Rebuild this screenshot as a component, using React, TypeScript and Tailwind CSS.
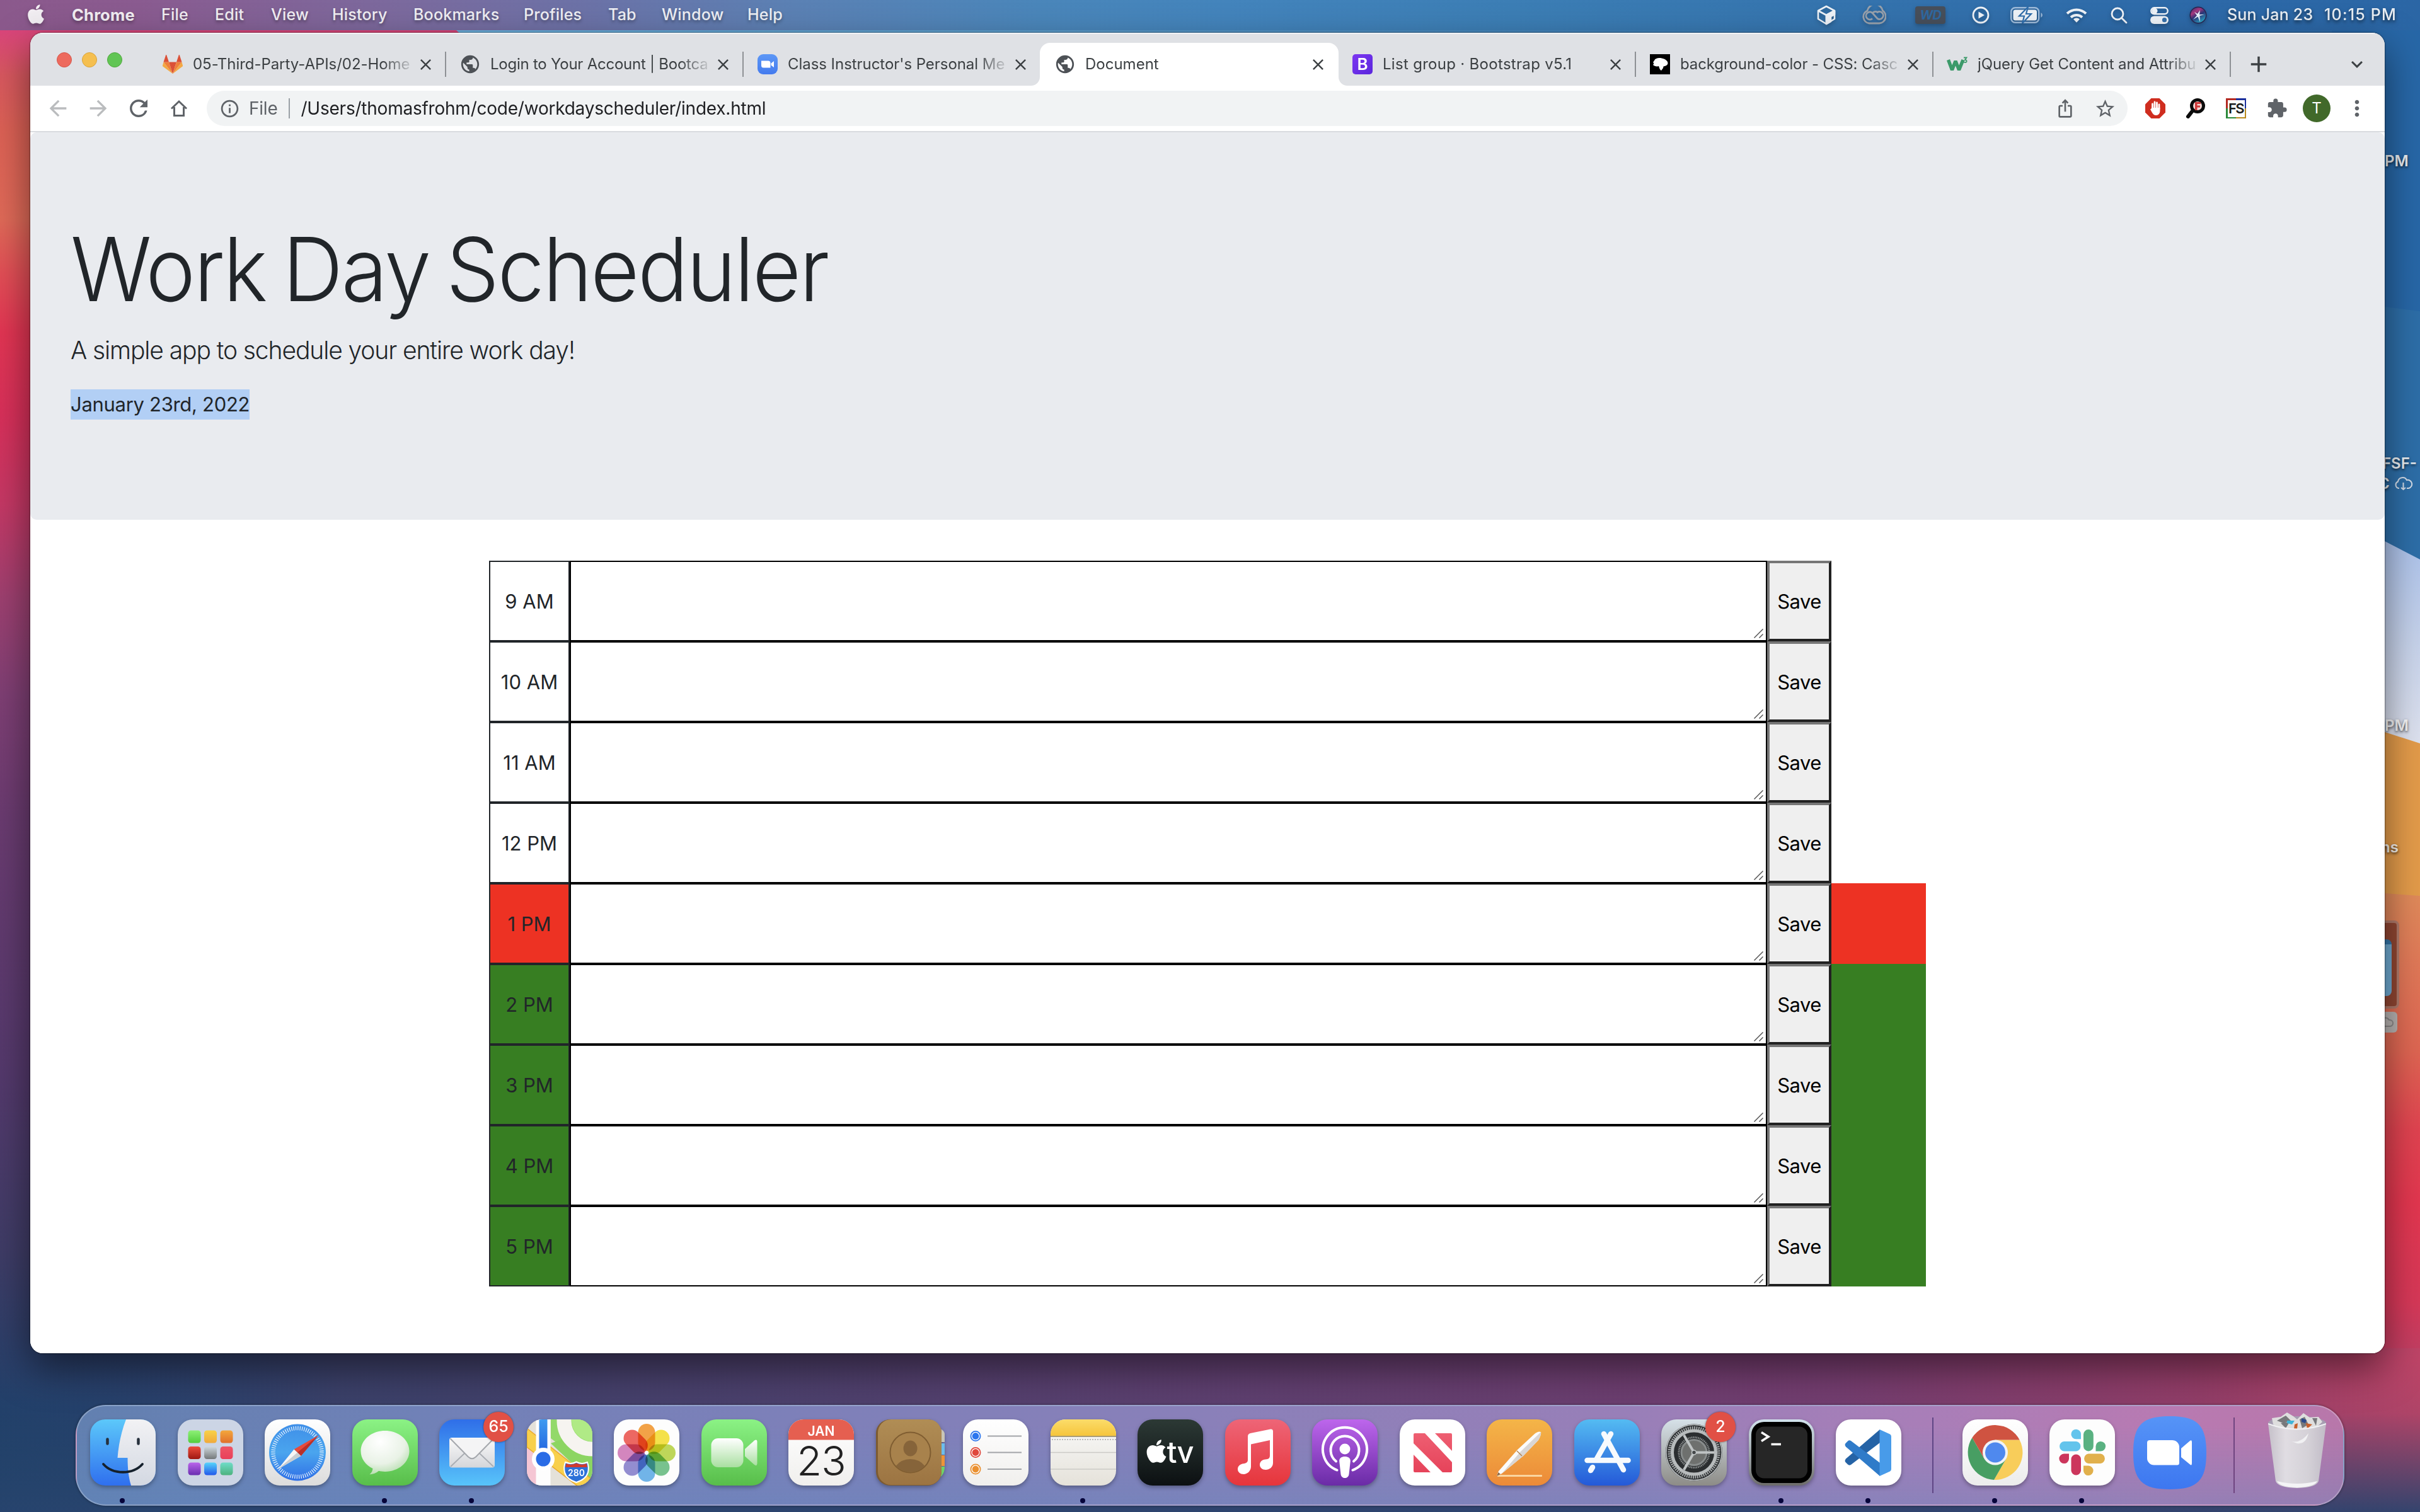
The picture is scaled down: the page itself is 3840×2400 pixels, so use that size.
import React from "react";
import { FaApple } from "react-icons/fa";
import {
  MdAdd,
  MdArrowBack,
  MdArrowForward,
  MdClose,
  MdExpandMore,
  MdExtension,
  MdInfoOutline,
  MdIosShare,
  MdMoreVert,
  MdPublic,
  MdRefresh,
  MdStarBorder,
} from "react-icons/md";

/* ---------- Wallpaper ---------- */

function Wallpaper() {
  return (
    <svg className="absolute inset-0 h-full w-full" viewBox="0 0 3840 2400" preserveAspectRatio="none">
      <defs>
        <linearGradient id="wl" x1="0" y1="0" x2="0" y2="2400" gradientUnits="userSpaceOnUse">
          <stop offset="0.02" stopColor="#d9457a" />
          <stop offset="0.05" stopColor="#d8585f" />
          <stop offset="0.085" stopColor="#dc6155" />
          <stop offset="0.145" stopColor="#e06a58" />
          <stop offset="0.18" stopColor="#e24f56" />
          <stop offset="0.22" stopColor="#e23553" />
          <stop offset="0.275" stopColor="#d8305a" />
          <stop offset="0.333" stopColor="#c53865" />
          <stop offset="0.396" stopColor="#9d4070" />
          <stop offset="0.458" stopColor="#7f3f74" />
          <stop offset="0.54" stopColor="#6a3b70" />
          <stop offset="0.71" stopColor="#54396c" />
          <stop offset="0.83" stopColor="#3e3c66" />
          <stop offset="0.93" stopColor="#22406a" />
          <stop offset="1" stopColor="#1b4066" />
        </linearGradient>
        <linearGradient id="wb" x1="0" y1="0" x2="3840" y2="0" gradientUnits="userSpaceOnUse">
          <stop offset="0" stopColor="#274170" stopOpacity="0" />
          <stop offset="0.14" stopColor="#3c4069" />
          <stop offset="0.28" stopColor="#4a406c" />
          <stop offset="0.52" stopColor="#633f70" />
          <stop offset="0.76" stopColor="#793d70" />
          <stop offset="0.91" stopColor="#9a3d68" />
          <stop offset="1" stopColor="#be4467" />
        </linearGradient>
        <linearGradient id="wbb" x1="0" y1="2160" x2="0" y2="2400" gradientUnits="userSpaceOnUse">
          <stop offset="0" stopColor="#24446b" stopOpacity="0" />
          <stop offset="0.35" stopColor="#28446b" stopOpacity="0.1" />
          <stop offset="1" stopColor="#28446e" stopOpacity="0.92" />
        </linearGradient>
        <linearGradient id="wr" x1="0" y1="1420" x2="0" y2="2400" gradientUnits="userSpaceOnUse">
          <stop offset="0" stopColor="#e08a5a" />
          <stop offset="0.1" stopColor="#e07a58" />
          <stop offset="0.25" stopColor="#de6652" />
          <stop offset="0.38" stopColor="#e04350" />
          <stop offset="0.5" stopColor="#e2364f" />
          <stop offset="0.66" stopColor="#d63858" />
          <stop offset="0.8" stopColor="#b2426a" />
          <stop offset="1" stopColor="#8a4474" />
        </linearGradient>
        <linearGradient id="wt" x1="720" y1="0" x2="3840" y2="0" gradientUnits="userSpaceOnUse">
          <stop offset="0" stopColor="#6cb0de" />
          <stop offset="0.3" stopColor="#5c9dcc" />
          <stop offset="0.6" stopColor="#3f80b8" />
          <stop offset="1" stopColor="#2a68a8" />
        </linearGradient>
        <linearGradient id="wi" x1="0" y1="860" x2="0" y2="1180" gradientUnits="userSpaceOnUse">
          <stop offset="0" stopColor="#acc2ea" />
          <stop offset="0.5" stopColor="#c6d2ea" />
          <stop offset="1" stopColor="#dee2ef" />
        </linearGradient>
      </defs>
      <rect width="3840" height="2400" fill="url(#wl)" />
      <path d="M715 40H3840V80H760Z" fill="url(#wt)" />
      <rect x="3700" y="40" width="140" height="900" fill="#2767a7" />
      <path d="M3700 476L3840 494V900H3700Z" fill="#2d6ea8" />
      <path d="M3700 840L3784 859L3840 888V1220H3700Z" fill="url(#wi)" />
      <path d="M3700 1150L3784 1162L3840 1180V1430H3700Z" fill="#e39b4a" />
      <path d="M3760 1416L3840 1422V2180H3760Z" fill="url(#wr)" />
      <rect y="2140" width="3840" height="260" fill="url(#wb)" />
      <rect y="2140" width="3840" height="260" fill="url(#wbb)" />
    </svg>
  );
}

function DesktopItems() {
  return (
    <div className="absolute inset-0 text-[24px] font-semibold leading-none text-white/90 [text-shadow:0_2px_4px_rgba(0,0,0,0.7)]">
      <span className="absolute left-[3784px] top-[244px]">PM</span>
      <span className="absolute left-[3780px] top-[724px]">FSF-</span>
      <span className="absolute left-[3774px] top-[756px]">C</span>
      <svg className="absolute left-[3799px] top-[755px] h-[24px] w-[30px]" viewBox="0 0 30 24" fill="none" stroke="#d5dde8" strokeWidth="2">
        <path d="M8 20H7A5.5 5.5 0 0 1 6 9.500A7.500 7.500 0 0 1 20 7A6.500 6.500 0 0 1 23 20H20M14.500 11V22M11 19L14.500 22L18 19" />
      </svg>
      <span className="absolute left-[3784px] top-[1140px]">PM</span>
      <span className="absolute left-[3778px] top-[1333px]">ns</span>
      <div className="absolute left-[3740px] top-[1461px] h-[140px] w-[67px] rounded-[8px] border-4 border-[#b07a6a] bg-[#914632]" />
      <div className="absolute left-[3740px] top-[1491px] h-[90px] w-[55px] rounded-[8px] border-t-8 border-[#3477ab] bg-[#6fabd3]" />
      <div className="absolute left-[3740px] top-[1606px] h-[33px] w-[64px] rounded-[6px] bg-[#b9b4b2]" />
      <svg className="absolute left-[3774px] top-[1612px] h-[22px] w-[24px]" viewBox="0 0 24 22" fill="none" stroke="#8d8a8a" strokeWidth="2">
        <path d="M4 17A5 5 0 0 1 5 7A7 7 0 0 1 17 7A5 5 0 0 1 19 17Z" />
      </svg>
    </div>
  );
}

/* ---------- Menu bar ---------- */

const MENU: [string, string][] = [
  ["File", "w-[85px]"],
  ["Edit", "w-[89px]"],
  ["View", "w-[97px]"],
  ["History", "w-[129px]"],
  ["Bookmarks", "w-[175px]"],
  ["Profiles", "w-[134px]"],
  ["Tab", "w-[85px]"],
  ["Window", "w-[136px]"],
  ["Help", "w-[60px]"],
];

function MenuBar() {
  return (
    <div className="relative flex h-[48px] w-full shrink-0 items-center bg-[linear-gradient(90deg,#8b598c_0px,#8a5b90_220px,#7b6a9e_640px,#6a73a8_960px,#5b81b4_1260px,#4a86ba_1650px,#4384bc_1950px,#3c7eb5_2400px,#3574ae_2900px,#2d69a8_3500px,#2b66a5_3840px)] text-[25px] font-medium tracking-[0.2px] text-white/90 [text-shadow:0_3px_5px_rgba(0,0,0,0.35)]">
      <FaApple className="ml-[39px] h-[35px] w-[36px] -translate-y-[2px] drop-shadow-[0_3px_3px_rgba(0,0,0,0.3)]" />
      <span className="ml-[39px] w-[142px] text-[25.5px] font-bold">Chrome</span>
      {MENU.map(([t, w]) => (
        <span key={t} className={w}>
          {t}
        </span>
      ))}
      <div className="ml-auto mr-[36px] flex h-full items-center drop-shadow-[0_3px_3px_rgba(0,0,0,0.25)]">
        <svg className="h-[32px] w-[30px]" viewBox="0 0 30 32" fill="none" stroke="#eef2f7" strokeWidth="2.6" strokeLinejoin="round">
          <path d="M15 2L28 9V22L15 30L2 22V9Z" />
          <path d="M2 9L15 16L28 9M15 16V30" />
          <path d="M15 16L28 9V15L22 18V26L15 30Z" fill="#eef2f7" />
        </svg>
        <svg className="ml-[41px] h-[30px] w-[39px]" viewBox="0 0 39 30" fill="none" stroke="#98a1ac" strokeWidth="2.800">
          <path d="M12 28A10.500 10.500 0 0 1 9 8A12.500 12.500 0 0 1 33.500 8A11 11 0 0 1 28 28Z" />
          <path d="M17 20.500A6 6 0 1 1 17 11.500L25 20.500A6 6 0 1 0 25 10.500Q22 8 17 11.500" />
        </svg>
        <div className="ml-[46px] flex h-[28px] w-[48px] items-center justify-center rounded-[4px] bg-[#474f5b] text-[20px] font-bold italic tracking-[-1px] text-[#2f68a0] [text-shadow:none]">
          WD
        </div>
        <svg className="ml-[42px] h-[28px] w-[28px]" viewBox="0 0 28 28" fill="none" stroke="#eef2f7" strokeWidth="2.8">
          <circle cx="14" cy="14" r="12" />
          <path d="M10.500 8.500L20 14L10.500 19.500Z" fill="#eef2f7" stroke="none" />
        </svg>
        <svg className="ml-[33px] h-[26px] w-[52px]" viewBox="0 0 52 26" fill="none">
          <rect x="1.200" y="1.200" width="44" height="23.600" rx="6.500" stroke="#9dbad9" strokeWidth="2.400" />
          <path d="M48.500 9A4.500 4.500 0 0 1 48.500 17Z" fill="#9dbad9" />
          <rect x="4.500" y="4.500" width="37.500" height="17" rx="3.500" fill="#eef2f7" />
          <path d="M28 0L14 14.500H22L19 26L33 11H25Z" fill="#eef2f7" stroke="#2f6dab" strokeWidth="2.200" />
        </svg>
        <svg className="ml-[36px] h-[24px] w-[34px]" viewBox="0 0 34 24" fill="none" stroke="#eef2f7" strokeWidth="4">
          <path d="M2 9.500A21.500 21.500 0 0 1 32 9.500M8 15.500A13 13 0 0 1 26 15.500" />
          <path d="M12 18.500A7.500 7.500 0 0 1 22 18.500L17 23.800Z" fill="#eef2f7" stroke="none" />
        </svg>
        <svg className="ml-[37px] h-[27px] w-[27px]" viewBox="0 0 27 27" fill="none" stroke="#eef2f7" strokeWidth="2.800" strokeLinecap="round">
          <circle cx="11" cy="11" r="9" />
          <path d="M17.500 17.500L25 25" />
        </svg>
        <svg className="ml-[36px] h-[27px] w-[29px]" viewBox="0 0 29 27" fill="none">
          <rect x="1.300" y="1.300" width="26.400" height="10" rx="5" stroke="#eef2f7" strokeWidth="2.400" />
          <circle cx="7" cy="6.300" r="4.500" fill="#eef2f7" />
          <rect y="14.500" width="29" height="12.500" rx="6.200" fill="#eef2f7" />
          <circle cx="22.500" cy="20.700" r="3.600" fill="#3570ab" />
        </svg>
        <svg className="ml-[33px] h-[28px] w-[28px]" viewBox="0 0 28 28">
          <defs>
            <linearGradient id="siri" x1="0" y1="0" x2="0.6" y2="1">
              <stop offset="0" stopColor="#3a2f6e" />
              <stop offset="0.35" stopColor="#a8397f" />
              <stop offset="0.6" stopColor="#2b3678" />
              <stop offset="1" stopColor="#2a9cc0" />
            </linearGradient>
          </defs>
          <circle cx="14" cy="14" r="13.500" fill="#2a2350" />
          <circle cx="14" cy="14" r="12" fill="url(#siri)" />
          <path d="M13 12L8 9L12 14.500L6 21L13.500 16.500L17 25L16.500 15L24 13L16 13L17 6Z" fill="#e6f2fb" />
        </svg>
        <span className="ml-[32px] w-[154px] whitespace-nowrap">Sun Jan 23</span>
        <span className="w-[116px] whitespace-nowrap tracking-[1.2px]">10:15 PM</span>
      </div>
    </div>
  );
}

/* ---------- Favicons ---------- */

function GitlabIcon() {
  return (
    <svg className="h-[30px] w-[32px]" viewBox="0 0 32 30">
      <path d="M16 30L22 11.500H10Z" fill="#db5037" />
      <path d="M16 30L10 11.500H1.500Z" fill="#ef7f3a" />
      <path d="M1.500 11.500L0 17A1.500 1.500 0 0 0 .5 18.500L16 30Z" fill="#f3a844" />
      <path d="M1.500 11.500H10L6.300 .5Q5.700 -.5 5.100 .5Z" fill="#db5037" />
      <path d="M16 30L22 11.500H30.500Z" fill="#ef7f3a" />
      <path d="M30.500 11.500L32 17A1.500 1.500 0 0 1 31.500 18.500L16 30Z" fill="#f3a844" />
      <path d="M30.500 11.500H22L25.700 .5Q26.300 -.5 26.900 .5Z" fill="#db5037" />
    </svg>
  );
}

function GlobeIcon() {
  return <MdPublic className="h-[34px] w-[34px] shrink-0 text-[#4d5156]" />;
}

function ZoomFavicon() {
  return (
    <svg className="h-[32px] w-[32px]" viewBox="0 0 32 32">
      <defs>
        <linearGradient id="zf" x1="0" y1="0" x2="0" y2="1">
          <stop offset="0" stopColor="#5c97f6" />
          <stop offset="1" stopColor="#447bee" />
        </linearGradient>
      </defs>
      <rect width="32" height="32" rx="9" fill="url(#zf)" />
      <path d="M6 10.500H17A3.500 3.500 0 0 1 20.500 14V21.500H9.500A3.500 3.500 0 0 1 6 18ZM21.500 14.500L26 11V21L21.500 17.500Z" fill="#fff" />
    </svg>
  );
}

function BootstrapIcon() {
  return (
    <div className="flex h-[32px] w-[32px] items-center justify-center rounded-[5px] bg-linear-to-br from-[#7d36f2] to-[#5a26dc] text-[26px] font-semibold leading-none text-white">
      B
    </div>
  );
}

function MdnIcon() {
  return (
    <svg className="h-[32px] w-[32px]" viewBox="0 0 32 32">
      <rect width="32" height="32" fill="#000" />
      <path d="M7 10C9 6 14 5.500 19 6.500C24 7.500 28 10 28.500 14C28.500 16 27 18 25 18.500L21.500 19.500L21 22L18 26C15 24 15 21 14 19C11 20 7 19 5 17L6.500 14.500L5 13Z" fill="#fff" />
    </svg>
  );
}

function W3Icon() {
  return (
    <svg className="h-[32px] w-[34px]" viewBox="0 0 34 32" fill="none" stroke="#3c9a6a">
      <path d="M2.500 9L8.500 25L14 11L19.500 25L26 9" strokeWidth="5.400" strokeLinejoin="bevel" />
      <path d="M27 5.500H31.500L29 9Q32.500 9.500 31.500 12Q30 14 27 12.500" strokeWidth="1.800" />
    </svg>
  );
}

/* ---------- Browser chrome ---------- */

type TabInfo = { title: string; icon: React.ReactNode; active?: boolean; sep?: boolean; fade?: boolean; tracking?: string };

const TABS: TabInfo[] = [
  { title: "05-Third-Party-APIs/02-Home", icon: <GitlabIcon />, sep: true, fade: true, tracking: "tracking-[-0.05px]" },
  { title: "Login to Your Account | Bootca", icon: <GlobeIcon />, sep: true, fade: true, tracking: "tracking-[-0.24px]" },
  { title: "Class Instructor's Personal Me", icon: <ZoomFavicon />, fade: true, tracking: "tracking-[-0.05px]" },
  { title: "Document", icon: <GlobeIcon />, active: true },
  { title: "List group · Bootstrap v5.1", icon: <BootstrapIcon />, sep: true, tracking: "tracking-[0.3px]" },
  { title: "background-color - CSS: Casc", icon: <MdnIcon />, sep: true, fade: true, tracking: "tracking-[-0.1px]" },
  { title: "jQuery Get Content and Attribu", icon: <W3Icon />, sep: true, fade: true, tracking: "tracking-[-0.1px]" },
];

function Tab({ tab }: { tab: TabInfo }) {
  return (
    <div className="relative flex h-[68px] w-[472px] shrink-0 items-center">
      {tab.active && (
        <svg className="absolute -left-[16px] top-0 h-[68px] w-[504px]" viewBox="0 0 504 68">
          <path d="M0 68A14 14 0 0 0 14 54V16A16 16 0 0 1 30 0H472A16 16 0 0 1 488 16V54A14 14 0 0 0 502 68Z" fill="#fff" />
        </svg>
      )}
      <div className="relative ml-[21px] flex w-[34px] justify-center">{tab.icon}</div>
      <div
        className={`relative ml-[15px] w-[346px] whitespace-nowrap ${tab.tracking ?? ""} ${
          tab.fade ? "[mask-image:linear-gradient(90deg,#000_300px,rgba(0,0,0,0.15)_346px)]" : ""
        }`}
      >
        {tab.title}
      </div>
      <MdClose className="relative ml-[9px] h-[29px] w-[29px] text-[#3c4043]" />
      {tab.sep && <div className="ml-auto h-[40px] w-[2px] bg-[#8e9195]" />}
    </div>
  );
}

function TabStrip() {
  return (
    <div className="flex h-[84px] shrink-0 items-end bg-[#dfe1e5] text-[24px] text-[#3c4043] shadow-[inset_0_2px_0_rgba(255,255,255,0.6)]">
      <div className="flex h-[82px] w-[188px] shrink-0 items-center gap-[16px] pl-[42px]">
        <div className="h-[24px] w-[24px] rounded-full border border-[#d5564b] bg-[#ed6a5e]" />
        <div className="h-[24px] w-[24px] rounded-full border border-[#d9a43c] bg-[#f5bf4f]" />
        <div className="h-[24px] w-[24px] rounded-full border border-[#51a73f] bg-[#61c554]" />
      </div>
      {TABS.map((t) => (
        <Tab key={t.title} tab={t} />
      ))}
      <div className="flex h-[68px] flex-1 items-center justify-between pl-[23px] pr-[26px]">
        <MdAdd className="h-[42px] w-[42px]" />
        <MdExpandMore className="h-[36px] w-[36px]" />
      </div>
    </div>
  );
}

function Toolbar() {
  return (
    <div className="flex h-[74px] shrink-0 items-center border-b-2 border-[#d9dbdf] bg-white text-[#5f6368]">
      <div className="flex w-[280px] items-center pl-[24px]">
        <MdArrowBack className="h-[40px] w-[40px] text-[#babcbe]" />
        <MdArrowForward className="ml-[24px] h-[40px] w-[40px] text-[#babcbe]" />
        <MdRefresh className="ml-[23px] h-[42px] w-[42px]" />
        <svg className="ml-[29px] h-[28px] w-[28px]" viewBox="0 0 28 28" fill="none" stroke="#5f6368" strokeWidth="3">
          <path d="M2 14.500L14 3L26 14.500M6.500 12V25.500H21.500V12" />
        </svg>
      </div>
      <div className="flex h-[56px] w-[3048px] items-center rounded-full bg-[#f1f3f4] pl-[20px] pr-[18px] text-[28px] tracking-[-0.23px]">
        <MdInfoOutline className="h-[33px] w-[33px]" />
        <span className="ml-[14px]">File</span>
        <div className="ml-[17px] h-[32px] w-[2px] bg-[#9aa0a6]" />
        <span className="ml-[18px] text-[#202124]">/Users/thomasfrohm/code/workdayscheduler/index.html</span>
        <MdIosShare className="ml-auto h-[32px] w-[32px]" />
        <MdStarBorder className="ml-[30px] h-[35px] w-[35px]" />
      </div>
      <svg className="ml-[28px] h-[32px] w-[32px]" viewBox="0 0 32 32">
        <path d="M9.500 0H22.500L32 9.500V22.500L22.500 32H9.500L0 22.500V9.500Z" fill="#cf2d1f" />
        <path d="M11.500 18V9M15 16V6M18.500 16V7M22 17V10" stroke="#fff" strokeWidth="2.800" strokeLinecap="round" />
        <path d="M10.200 15H23.400V20C23.400 24 21 27 17.500 27C14 27 12 25 10.500 22L8 17.500L9.500 16.500Z" fill="#fff" />
      </svg>
      <svg className="ml-[32px] h-[32px] w-[32px]" viewBox="0 0 32 32">
        <circle cx="19" cy="12" r="9.500" fill="#f4d9d7" stroke="#0b0b0b" strokeWidth="5" />
        <path d="M11 20L4 29" stroke="#0b0b0b" strokeWidth="6" strokeLinecap="round" />
        <path d="M15 19V6H24V9H18.500V11.500H23V14.500H18.500V19Z" fill="#cf3b3b" />
      </svg>
      <div className="ml-[32px] flex h-[32px] w-[32px] items-center justify-center bg-[conic-gradient(#1c2f9c_0_25%,#b98b1f_0_50%,#2c8a3a_0_75%,#b32a22_0)]">
        <div className="flex h-[27px] w-[27px] items-center justify-center bg-white text-[22px] font-semibold tracking-[-1.5px] text-[#1c1c1c]">FS</div>
      </div>
      <MdExtension className="ml-[32px] h-[34px] w-[34px]" />
      <div className="ml-[24px] flex h-[44px] w-[44px] items-center justify-center rounded-full bg-[#41692a] text-[24px] text-white">T</div>
      <MdMoreVert className="ml-[22px] h-[40px] w-[40px]" />
    </div>
  );
}

/* ---------- Page ---------- */

const HOURS: [string, "past" | "present" | "future"][] = [
  ["9 AM", "past"],
  ["10 AM", "past"],
  ["11 AM", "past"],
  ["12 PM", "past"],
  ["1 PM", "present"],
  ["2 PM", "future"],
  ["3 PM", "future"],
  ["4 PM", "future"],
  ["5 PM", "future"],
];

const ROW_BG = { past: "bg-white", present: "bg-[#ed3223]", future: "bg-[#377e22]" };

function Scheduler() {
  return (
    <div className="ml-[728px] mt-[65px] flex w-[2280px] flex-col text-[31px]">
      {HOURS.map(([label, state]) => (
        <div key={label} className={`flex h-[128px] ${ROW_BG[state]}`}>
          <div className="flex w-[128px] items-center justify-center border-2 border-[#212529] pt-[2px] text-[#212529]">{label}</div>
          <div className="flex w-[1900px] items-end justify-end border-2 border-black bg-white pb-[3px] pr-[4px]">
            <svg className="h-[15px] w-[15px]" viewBox="0 0 15 15" fill="none" stroke="#555" strokeWidth="1.500">
              <path d="M.5 14.500L14.500 .5M8.500 14.500L14.500 8.500" />
            </svg>
          </div>
          <div className="flex w-[102px] items-center justify-center border-4 border-b-[#212121] border-l-[#767676] border-r-[#212121] border-t-[#767676] bg-[#efefef] pt-[2px] tracking-[-0.6px] text-black">
            Save
          </div>
        </div>
      ))}
    </div>
  );
}

function Page() {
  return (
    <div className="flex flex-1 flex-col bg-white text-[#212529]">
      <div className="flex h-[615px] flex-col items-start rounded-[10px] bg-[#e9ebef] pl-[64px] pt-[131px]">
        <h1 className="flex h-[172px] origin-left scale-x-95 items-center whitespace-nowrap text-[140px] font-light leading-none tracking-[-2.600px] [word-spacing:-9px]">
          Work Day Scheduler
        </h1>
        <p className="mt-[13px] flex h-[60px] items-center text-[39px] font-light tracking-[-1.1px]">
          A simple app to schedule your entire work day!
        </p>
        <p className="mt-[32px] flex h-[48px] items-center bg-[#b2cff5] pt-[1px] text-[31px] tracking-[-0.3px]">January 23rd, 2022</p>
      </div>
      <Scheduler />
    </div>
  );
}

/* ---------- Dock icons ---------- */

function Icon({ children }: { children: React.ReactNode }) {
  return (
    <svg className="h-[105px] w-[104px] overflow-visible drop-shadow-[0_3px_3px_rgba(0,0,0,0.3)]" viewBox="0 0 104 105">
      {children}
    </svg>
  );
}

function Grad({ id, from, to, mid }: { id: string; from: string; to: string; mid?: string }) {
  return (
    <linearGradient id={id} x1="0" y1="0" x2="0" y2="1">
      <stop offset="0" stopColor={from} />
      {mid && <stop offset="0.5" stopColor={mid} />}
      <stop offset="1" stopColor={to} />
    </linearGradient>
  );
}

function Base({ fill }: { fill: string }) {
  return <rect width="104" height="105" rx="24" fill={fill} />;
}

function Finder() {
  return (
    <Icon>
      <defs>
        <Grad id="f1" from="#5cc8fa" to="#2f6fee" />
        <Grad id="f2" from="#f2f2f4" to="#d3d8e2" />
        <clipPath id="rc">
          <rect width="104" height="105" rx="24" />
        </clipPath>
      </defs>
      <g clipPath="url(#rc)">
        <rect width="104" height="105" fill="url(#f1)" />
        <path d="M57 0C50 18 45 40 43.500 61H59.500C59.500 78 61 92 65 105H104V0Z" fill="url(#f2)" />
      </g>
      <path d="M27.500 31.500V38.500M76.500 31.500V38.500" stroke="#26303c" strokeWidth="4.500" strokeLinecap="round" />
      <path d="M21 71C36 88 68 88 83 71" fill="none" stroke="#15202c" strokeWidth="3.800" strokeLinecap="round" />
    </Icon>
  );
}

const PADS: [string, string][] = [
  ["#8ef077", "#52ce3c"], ["#f8d24a", "#f0a93a"], ["#f3a73c", "#e0702c"],
  ["#ee4d3c", "#9e1812"], ["#cfd9de", "#74787a"], ["#ee5566", "#e8405a"],
  ["#b964ea", "#6a2fb0"], ["#57d4fb", "#2258ea"], ["#6fdcc8", "#4db27e"],
];

function Launchpad() {
  return (
    <Icon>
      <Base fill="#ccd5e5" />
      {PADS.map(([a, b], i) => (
        <g key={i}>
          <defs>
            <Grad id={`pad${i}`} from={a} to={b} />
          </defs>
          <rect x={16.500 + (i % 3) * 25.500} y={17.500 + Math.floor(i / 3) * 25.500} width="20" height="20" rx="4.500" fill={`url(#pad${i})`} />
        </g>
      ))}
    </Icon>
  );
}

function Safari() {
  return (
    <Icon>
      <defs>
        <Grad id="s1" from="#ffffff" to="#dcdcdc" />
        <Grad id="s2" from="#3f8fe8" mid="#4aa5ee" to="#2f6fe6" />
      </defs>
      <Base fill="url(#s1)" />
      <circle cx="52" cy="52.500" r="45" fill="url(#s2)" />
      <circle cx="52" cy="52.500" r="38.500" fill="none" stroke="#e8f3fc" strokeWidth="6.500" strokeDasharray="1.200 2.160" />
      <path d="M85.700 25L46.500 47.500L57.500 58Z" fill="#e64a3c" />
      <path d="M85.700 25L52 52.500L57.500 58Z" fill="#b9302a" />
      <path d="M21 79L46.500 47.500L57.500 58Z" fill="#f6f6f6" />
      <path d="M21 79L52 52.500L57.500 58Z" fill="#c9ced2" />
    </Icon>
  );
}

function Messages() {
  return (
    <Icon>
      <defs>
        <Grad id="m1" from="#8bf285" to="#58be4a" />
        <radialGradient id="m2" cx="0.4" cy="0.25" r="0.85">
          <stop offset="0" stopColor="#fff" />
          <stop offset="0.6" stopColor="#e9f2e6" />
          <stop offset="1" stopColor="#a9d8a0" />
        </radialGradient>
      </defs>
      <Base fill="url(#m1)" />
      <path d="M52 18C73.500 18 90.500 32.500 90.500 50.300S73.500 83 52 83C48 83 45 82.500 42 81.800C38 85.500 32 87.500 27.500 87.200C31 84.500 32 81.500 32.500 78C21 72.500 13.500 62.500 13.500 50.300C13.500 32.500 30.500 18 52 18Z" fill="url(#m2)" />
    </Icon>
  );
}

function Mail() {
  return (
    <Icon>
      <defs>
        <Grad id="ma1" from="#2f6ee8" to="#58c4fa" />
        <Grad id="ma2" from="#fafafa" to="#d4d6da" />
      </defs>
      <Base fill="url(#ma1)" />
      <rect x="16" y="29" width="72" height="47.500" rx="4" fill="url(#ma2)" />
      <path d="M18 75L41 53M86 75L63 53" stroke="#a9adb3" strokeWidth="1.800" />
      <path d="M17.500 30.500L46 59.500Q52 65 58 59.500L86.500 30.500" fill="#f4f4f5" stroke="#a4a7ac" strokeWidth="2" />
    </Icon>
  );
}

function Maps() {
  return (
    <Icon>
      <defs>
        <Grad id="mp" from="#3f9af0" to="#2468e0" />
      </defs>
      <g clipPath="url(#rc)">
        <rect width="104" height="105" fill="#e4e1d9" />
        <path d="M38 0H104V80L38 30Z" fill="#93d96a" />
        <path d="M38 38L104 100V50L60 30Z" fill="#8cd562" />
        <circle cx="104" cy="2" r="45" fill="none" stroke="#f6f4f0" strokeWidth="23" />
        <circle cx="104" cy="2" r="33" fill="#b0ea86" />
        <path d="M0 44L15 58V105H0Z" fill="#f5c6d4" />
        <path d="M0 14L104 96V124L0 44Z" fill="#f8d04c" stroke="#eba92f" strokeWidth="1.500" />
        <rect x="14.500" width="23" height="105" fill="#fdfdfd" />
        <rect x="19.500" width="13" height="50" fill="url(#mp)" />
        <circle cx="26" cy="63" r="18" fill="#fff" />
        <circle cx="26" cy="63" r="11.500" fill="#2a6ce6" />
      </g>
      <path d="M61 68Q70 72 78.500 67.500Q87 72 96 68Q99 76 97 84Q94 95 78.500 100Q63 95 60 84Q58 76 61 68Z" fill="#2c71d8" stroke="#fff" strokeWidth="2" />
      <path d="M62.500 70Q70 73.500 78.500 69.500Q87 73.500 94.500 70L96 76H61Z" fill="#cf3b30" />
      <text x="78.500" y="90" fontSize="14" fontWeight="600" fill="#fff" textAnchor="middle">280</text>
    </Icon>
  );
}

const PETALS = ["#f19a37", "#f3de3c", "#b8d24b", "#6cbd84", "#65aee6", "#8a83cc", "#cf7cb8", "#ea5b55"];

function Photos() {
  return (
    <Icon>
      <Base fill="#fdfdfd" />
      <g className="isolate">
        {PETALS.map((c, i) => (
          <rect key={c} x="38.500" y="7" width="27" height="43" rx="13.500" fill={c} fillOpacity="0.92" transform={`rotate(${i * 45} 52 53)`} className="mix-blend-multiply" />
        ))}
      </g>
    </Icon>
  );
}

function FaceTime() {
  return (
    <Icon>
      <defs>
        <Grad id="ft2" from="#ffffff" to="#a9dfa0" />
      </defs>
      <Base fill="url(#m1)" />
      <rect x="15.500" y="30" width="51" height="46" rx="11" fill="url(#ft2)" />
      <path d="M69 47L84 33.500Q88 31 88.500 35V70Q88 75 84 72L69 58.500Z" fill="url(#ft2)" />
    </Icon>
  );
}

function Calendar() {
  return (
    <Icon>
      <defs>
        <Grad id="c1" from="#ffffff" to="#f0efed" />
      </defs>
      <Base fill="url(#c1)" />
      <rect width="104" height="32.500" fill="#e55f50" clipPath="url(#rc)" />
      <text x="52" y="25.500" fontSize="21" fontWeight="600" fill="#fff" textAnchor="middle">JAN</text>
      <text x="52" y="89" fontSize="65" fontWeight="300" fill="#222" textAnchor="middle" letterSpacing="-1">23</text>
    </Icon>
  );
}

function Contacts() {
  return (
    <Icon>
      <defs>
        <Grad id="co" from="#b08d55" to="#9c7442" />
      </defs>
      <path d="M92 14Q109 14 109 24V36H92Z" fill="#c9c5b6" />
      <rect x="92" y="38" width="17" height="18" fill="#6cbdec" />
      <rect x="92" y="57" width="17" height="17" fill="#ee9438" />
      <path d="M92 75H109Q109 92 92 96Z" fill="#6fd366" />
      <rect width="104" height="105" rx="22" fill="#7d5b30" />
      <rect x="3" width="101" height="104" rx="21" fill="url(#co)" />
      <circle cx="54.500" cy="52.500" r="32" fill="#a8824c" stroke="#7f5d31" strokeWidth="2" />
      <ellipse cx="54.500" cy="46" rx="11" ry="12.500" fill="#86643a" />
      <path d="M31.500 74Q40 63 54.500 63T77.500 74A32 32 0 0 1 31.500 74Z" fill="#86643a" />
    </Icon>
  );
}

function Reminders() {
  const rows: [number, string][] = [[26.500, "#2c76ee"], [52.500, "#e0483c"], [79, "#ea9030"]];
  return (
    <Icon>
      <Base fill="url(#c1)" />
      {rows.map(([y, c]) => (
        <g key={y}>
          <circle cx="20" cy={y} r="7.600" fill="#fff" stroke={c} strokeWidth="1.800" />
          <circle cx="20" cy={y} r="5.400" fill={c} />
          <rect x="39" y={y - 1} width="54" height="2" fill="#a2a4a8" />
        </g>
      ))}
    </Icon>
  );
}

function Notes() {
  return (
    <Icon>
      <defs>
        <Grad id="n1" from="#fafafa" to="#e5e2da" />
        <Grad id="n2" from="#fbdc6a" to="#f6c53c" />
      </defs>
      <Base fill="url(#n1)" />
      <g clipPath="url(#rc)">
        <rect width="104" height="26" fill="url(#n2)" />
        <rect y="26" width="104" height="2" fill="#a89c78" />
        <path d="M2 32H104" stroke="#b9b9b9" strokeWidth="2" strokeDasharray="2 2" />
        <path d="M0 52.500H104M0 79H104" stroke="#cbcac6" strokeWidth="1.500" />
      </g>
    </Icon>
  );
}

function AppleTv() {
  return (
    <Icon>
      <defs>
        <Grad id="tv" from="#2c3935" to="#0c1012" />
      </defs>
      <Base fill="url(#tv)" />
      <FaApple x="9" y="29.500" size={42} color="#fff" />
      <text x="46.500" y="69" fontSize="47" fontWeight="500" letterSpacing="-1" fill="#fff">tv</text>
    </Icon>
  );
}

function Music() {
  return (
    <Icon>
      <defs>
        <Grad id="mu" from="#ee6577" to="#e6353b" />
      </defs>
      <Base fill="url(#mu)" />
      <path d="M36 27Q36 23 40 22L72 15.500Q76 15 76 19V69C76 76 70 80 64.500 80C59 80 55 76.500 55 72C55 67 59 64 64 63.500C69 63 71 62 71 57V33L41 39.500V75C41 82 35 87 29.500 87C24 87 20 83.500 20 79C20 74 24 71 29 70.300C34 69.500 36 68 36 64Z" fill="#fff" />
    </Icon>
  );
}

function Podcasts() {
  return (
    <Icon>
      <defs>
        <Grad id="pc" from="#bd66ec" to="#6a2ba6" />
      </defs>
      <Base fill="url(#pc)" />
      <g fill="none" stroke="#fff" strokeWidth="4" strokeLinecap="round">
        <path d="M39.500 80.500A35 35 0 1 1 64.500 80.500" />
        <path d="M38 66.500A22.500 22.500 0 1 1 66 66.500" />
      </g>
      <circle cx="52" cy="47" r="8.500" fill="#fff" />
      <path d="M52 59C57 59 61 61.500 60.800 66L58.500 87C58 91 55 93 52 93S46 91 45.500 87L43.200 66C43 61.500 47 59 52 59Z" fill="#fff" />
    </Icon>
  );
}

function News() {
  return (
    <Icon>
      <defs>
        <Grad id="ne" from="#ee5f72" to="#e6435a" />
      </defs>
      <Base fill="#fff" />
      <path d="M24 22H40L83 68V82Q83 84 81 84H68L22 38V24Q22 22 24 22ZM56 22H81Q83 22 83 24V50ZM22 56L49 84H24Q22 84 22 82Z" fill="url(#ne)" />
    </Icon>
  );
}

function Pages() {
  return (
    <Icon>
      <defs>
        <Grad id="pg" from="#f4b548" to="#ec8a38" />
      </defs>
      <Base fill="url(#pg)" />
      <rect x="17" y="88" width="71" height="3" rx="1" fill="#fad5a0" />
      <path d="M86 20Q87 24 82 33L58 58L24 86L16 90L19 82L49 48L76 23Q82 18 86 20Z" fill="#fbfbfb" />
      <path d="M86 20Q87 24 82 33L58 58L24 86L53 52Z" fill="#d9d6d4" />
      <path d="M48 50L56 58" stroke="#b3824c" strokeWidth="1.500" />
      <path d="M16 90L18.500 84L22 87Z" fill="#8a6a4a" />
    </Icon>
  );
}

function AppStore() {
  return (
    <Icon>
      <defs>
        <Grad id="as" from="#54bbf2" to="#2459d8" />
      </defs>
      <Base fill="url(#as)" />
      <g stroke="#f7fafd" strokeWidth="8.500" strokeLinecap="round">
        <path d="M58 23L36 62" />
        <path d="M47 23L78 80" />
        <path d="M20.500 65H85.500" />
        <path d="M29 76L26 81" />
      </g>
    </Icon>
  );
}

function Preferences() {
  return (
    <Icon>
      <defs>
        <Grad id="pr" from="#d6e1e8" to="#8d8c87" />
      </defs>
      <Base fill="url(#pr)" />
      <circle cx="52" cy="52.500" r="45" fill="#2b2e30" />
      <circle cx="52" cy="52.500" r="44" fill="none" stroke="#b6babc" strokeWidth="1.500" />
      <circle cx="52" cy="52.500" r="39" fill="none" stroke="#a3a7a8" strokeWidth="5" strokeDasharray="1.900 1.500" />
      <circle cx="52" cy="52.500" r="34.500" fill="none" stroke="#b7bbbc" strokeWidth="5" />
      <circle cx="52" cy="52.500" r="24" fill="none" stroke="#8f9393" strokeWidth="3" strokeDasharray="1.500 1.200" />
      <circle cx="52" cy="52.500" r="20" fill="#6e706e" stroke="#888c8c" strokeWidth="3" />
      <path d="M52 52.500H84M52 52.500L36 25M52 52.500L36 80" stroke="#bfc3c4" strokeWidth="4" />
      <circle cx="52" cy="52.500" r="3.500" fill="#44484a" stroke="#c4c8c9" strokeWidth="1.500" />
    </Icon>
  );
}

function Terminal() {
  return (
    <Icon>
      <defs>
        <Grad id="te" from="#d3e4ee" to="#6d6c6a" />
      </defs>
      <Base fill="url(#te)" />
      <rect x="4" y="4" width="96" height="97" rx="20" fill="#000" />
      <rect x="11" y="11.500" width="82" height="82" rx="13" fill="#262626" />
      <path d="M20 20.500L31 27.500L20 34.500" fill="none" stroke="#fff" strokeWidth="3.500" />
      <path d="M35.500 39.500H51" stroke="#fff" strokeWidth="3.500" />
    </Icon>
  );
}

function VsCode() {
  return (
    <Icon>
      <Base fill="#fff" />
      <path d="M70 16V37L24 72Q21 73.500 19 71.500L15.500 68Q13.500 65.500 16 62.500Z" fill="#2563a6" />
      <path d="M70 90V69L24 34Q21 32.500 19 34.500L15.500 38Q13.500 40.500 16 43.500Z" fill="#2f7bc9" />
      <path d="M69.500 16L86 23.500Q88 24.500 88 27V79Q88 81.500 86 82.500L69.500 90Z" fill="#489be9" />
    </Icon>
  );
}

function Chrome() {
  return (
    <Icon>
      <defs>
        <Grad id="ch" from="#ffffff" to="#ececec" />
      </defs>
      <Base fill="url(#ch)" />
      <g transform="translate(52 52.500)">
        <path d="M0 -20H38.600A43.500 43.500 0 0 1 -2 43.400L17.300 10Z" fill="#f8cd5a" />
        <path d="M-2 43.400A43.500 43.500 0 0 1 -36.600 -23.400L-17.300 10H17.300Z" fill="#489e63" />
        <path d="M38.600 -20A43.500 43.500 0 0 0 -36.600 -23.400L-17.300 10L0 -20Z" fill="#cf5341" />
        <circle r="20" fill="#f1f3f6" />
        <circle r="16" fill="#4f89ee" />
      </g>
    </Icon>
  );
}

function Slack() {
  return (
    <Icon>
      <Base fill="#fdfdfd" />
      <path d="M50 31V24A7.800 7.800 0 1 0 42.300 31.300H50ZM23 35H42.500A7.800 7.800 0 0 1 42.500 50.500H23A7.800 7.800 0 0 1 23 35Z" fill="#63c4ec" />
      <path d="M54 24A7.900 7.900 0 0 1 69.800 24V42.500A7.900 7.900 0 0 1 54 42.500ZM73.500 50.500V42.500A7.800 7.800 0 1 1 81 50.500Z" fill="#5ab181" />
      <path d="M62 54.500H81A7.800 7.800 0 0 1 81 70H62A7.800 7.800 0 0 1 62 54.500ZM54 73.500H62A7.800 7.800 0 1 1 54 81.500Z" fill="#e1b04c" />
      <path d="M34.500 62.500A7.800 7.800 0 0 1 50 62.500V81.500A7.800 7.800 0 0 1 34.500 81.500ZM31 54.500V62.500A7.800 7.800 0 1 1 23 54.500Z" fill="#cc365c" />
    </Icon>
  );
}

function Zoom() {
  return (
    <svg className="-mx-[6px] h-[116px] w-[116px]" viewBox="0 0 116 116">
      <defs>
        <Grad id="zo" from="#5694f7" to="#3d77f0" />
      </defs>
      <path d="M58 0C102 0 116 14 116 58S102 116 58 116S0 102 0 58S14 0 58 0Z" fill="url(#zo)" />
      <path d="M26 38H62A11 11 0 0 1 73 49V74A3.500 3.500 0 0 1 69.500 77.500H33A11 11 0 0 1 22 66.500V42A4 4 0 0 1 26 38ZM76 51L90 39Q93 37 93 41V74.500Q93 79 90 76.500L76 65Z" fill="#fff" />
    </svg>
  );
}

function Trash() {
  return (
    <svg className="-my-[8px] h-[122px] w-[92px] -translate-y-[3px]" viewBox="0 0 92 122">
      <defs>
        <linearGradient id="tr" x1="0" y1="0" x2="1" y2="0">
          <stop offset="0" stopColor="#c6c4cb" />
          <stop offset="0.3" stopColor="#e3e2e5" />
          <stop offset="0.7" stopColor="#d6d5d9" />
          <stop offset="1" stopColor="#c2bfc8" />
        </linearGradient>
      </defs>
      <ellipse cx="46" cy="18" rx="46" ry="11" fill="#a69db2" />
      <path d="M6 10L20 8L30 1L40 7L46 12L56 2L66 9L80 8L86 16L74 27H18L8 20Z" fill="#dedede" />
      <path d="M14 14L28 6L36 14L24 18ZM50 12L58 8L64 20L54 26ZM70 10L78 10L76 22ZM20 18L34 16L28 26Z" fill="#77787b" />
      <path d="M30 14H42L38 20L30 18Z" fill="#3fb4d8" />
      <path d="M60 18L70 20L62 27ZM42 20L47 18L46 27H41Z" fill="#c8602c" />
      <path d="M53 10L61 13L59 18L53 16Z" fill="#2c4a8c" />
      <path d="M0 19Q46 36 92 19L80 110Q77 120 46 121Q15 120 12 110Z" fill="url(#tr)" fillOpacity="0.95" />
      <path d="M0 19Q46 36 92 19" fill="none" stroke="#f2f1f4" strokeWidth="2" />
      <path d="M14 110Q46 118 78 110Q74 119 46 120Q18 119 14 110Z" fill="#f4f4f6" />
      <path d="M34 46Q50 52 64 34Q60 52 46 50Z" fill="#f1f1f3" />
    </svg>
  );
}

type DockItem = { el: React.ReactNode; dot?: boolean; badge?: string };

const APPS: DockItem[] = [
  { el: <Finder />, dot: true },
  { el: <Launchpad /> },
  { el: <Safari /> },
  { el: <Messages />, dot: true },
  { el: <Mail />, dot: true, badge: "65" },
  { el: <Maps /> },
  { el: <Photos /> },
  { el: <FaceTime /> },
  { el: <Calendar /> },
  { el: <Contacts /> },
  { el: <Reminders /> },
  { el: <Notes />, dot: true },
  { el: <AppleTv /> },
  { el: <Music /> },
  { el: <Podcasts /> },
  { el: <News /> },
  { el: <Pages /> },
  { el: <AppStore /> },
  { el: <Preferences />, badge: "2" },
  { el: <Terminal />, dot: true },
  { el: <VsCode />, dot: true },
];

const RECENT: DockItem[] = [{ el: <Chrome />, dot: true }, { el: <Slack />, dot: true }, { el: <Zoom /> }];

function DockSlot({ item }: { item: DockItem }) {
  return (
    <div className="relative flex h-full w-[138.5px] shrink-0 items-center justify-center pb-[9px]">
      {item.el}
      {item.badge && (
        <div className="absolute left-[87px] top-[9px] flex h-[48px] w-[48px] items-center justify-center rounded-full bg-[#e15045] text-[25px] font-medium text-white shadow-[0_0_3px_rgba(0,0,0,0.5)]">
          {item.badge}
        </div>
      )}
      {item.dot && <div className="absolute bottom-[2px] left-[64px] h-[8px] w-[8px] rounded-full bg-[#06043a]" />}
    </div>
  );
}

function Dock() {
  return (
    <div className="relative mt-[82px] ml-[120px] flex h-[160px] w-[3600px] items-center rounded-[48px] border-2 border-white/25 bg-[linear-gradient(180deg,transparent_20%,rgba(95,135,190,0.4)),linear-gradient(90deg,#6280b0_0%,#7081b7_15%,#7c80b9_30%,#8a80b9_50%,#987fb8_68%,#a97eb8_82%,#b87ab2_92%,#b877aa_100%)] pl-[4px] shadow-[0_0_4px_rgba(0,0,0,0.4)]">
      {APPS.map((a, i) => (
        <DockSlot key={i} item={a} />
      ))}
      <div className="ml-[31px] h-[120px] w-[2px] bg-[#5f4685]" />
      <div className="ml-[29px] flex h-full">
        {RECENT.map((a, i) => (
          <DockSlot key={i} item={a} />
        ))}
      </div>
      <div className="ml-[32px] h-[120px] w-[2px] bg-[#6f4580]" />
      <div className="ml-[53px] flex h-full items-center pb-[10px]">
        <Trash />
      </div>
    </div>
  );
}

export default function App() {
  return (
    <div className="relative flex h-[2400px] w-[3840px] flex-col overflow-hidden font-['Inter','Liberation_Sans',sans-serif]">
      <Wallpaper />
      <DesktopItems />
      <MenuBar />
      <div className="relative ml-[48px] mt-[4px] flex h-[2096px] w-[3736px] shrink-0 flex-col overflow-hidden rounded-[20px] bg-white shadow-[0_0_2px_1px_rgba(0,0,0,0.35),0_24px_60px_rgba(0,0,0,0.5)]">
        <TabStrip />
        <Toolbar />
        <Page />
      </div>
      <Dock />
    </div>
  );
}
